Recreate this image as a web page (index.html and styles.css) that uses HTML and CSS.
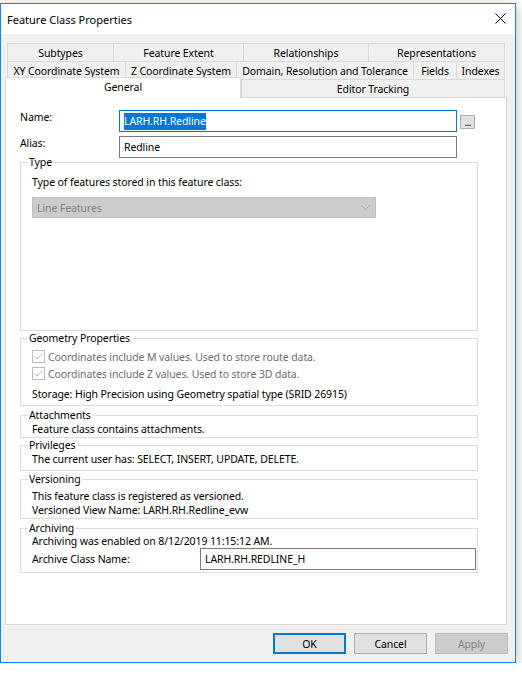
FILE: index.html
```html
<!DOCTYPE html>
<html lang="en">
  <head>
    <meta charset="UTF-8">
    <title>Feature Class Properties</title>
    <link rel="stylesheet" href="styles.css">
  </head>
  <body>
    <div class="window">
      <div class="titlebar">
        <span class="title">Feature Class Properties</span>
        <svg class="close" width="11" height="11" viewBox="0 0 11 11">
          <path d="M0.5 0.5 L10.5 10.5 M10.5 0.5 L0.5 10.5" stroke="#000" stroke-width="1" fill="none"/>
        </svg>
      </div>

      <div class="client">
        <!-- tab strip, three rows like the native control -->
        <div class="tab-row row-1">
          <div class="tab">Subtypes</div>
          <div class="tab">Feature Extent</div>
          <div class="tab">Relationships</div>
          <div class="tab">Representations</div>
        </div>
        <div class="tab-row row-2">
          <div class="tab">XY Coordinate System</div>
          <div class="tab">Z Coordinate System</div>
          <div class="tab">Domain, Resolution and Tolerance</div>
          <div class="tab">Fields</div>
          <div class="tab">Indexes</div>
        </div>
        <div class="tab-row row-3">
          <div class="tab active">General</div>
          <div class="tab">Editor Tracking</div>
        </div>

        <div class="panel">
          <div class="field">
            <label>Name:</label>
            <div class="textbox focused"><span class="selected">LARH.RH.Redline</span></div>
            <button class="browse">...</button>
          </div>
          <div class="field alias">
            <label>Alias:</label>
            <div class="textbox">Redline</div>
          </div>

          <fieldset class="group group-type">
            <legend>Type</legend>
            <div class="line type-note">Type of features stored in this feature class:</div>
            <div class="combo">
              <span>Line Features</span>
              <svg width="9" height="5" viewBox="0 0 9 5">
                <path d="M0.5 0.5 L4.5 4.5 L8.5 0.5" stroke="#a6a6a6" fill="none"/>
              </svg>
            </div>
          </fieldset>

          <fieldset class="group group-geometry">
            <legend>Geometry Properties</legend>
            <div class="check">
              <svg class="checkbox" width="13" height="13" viewBox="0 0 13 13">
                <rect x="0.5" y="0.5" width="12" height="12" fill="#fff" stroke="#bcbcbc"/>
                <path d="M2.5 6.5 L5 9 L10.5 3.5" stroke="#bcbcbc" fill="none"/>
              </svg>
              <span>Coordinates include M values. Used to store route data.</span>
            </div>
            <div class="check">
              <svg class="checkbox" width="13" height="13" viewBox="0 0 13 13">
                <rect x="0.5" y="0.5" width="12" height="12" fill="#fff" stroke="#bcbcbc"/>
                <path d="M2.5 6.5 L5 9 L10.5 3.5" stroke="#bcbcbc" fill="none"/>
              </svg>
              <span>Coordinates include Z values. Used to store 3D data.</span>
            </div>
            <div class="line storage">Storage: High Precision using Geometry spatial type (SRID 26915)</div>
          </fieldset>

          <fieldset class="group group-attachments">
            <legend>Attachments</legend>
            <div class="line">Feature class contains attachments.</div>
          </fieldset>

          <fieldset class="group group-privileges">
            <legend>Privileges</legend>
            <div class="line">The current user has: SELECT, INSERT, UPDATE, DELETE.</div>
          </fieldset>

          <fieldset class="group group-versioning">
            <legend>Versioning</legend>
            <div class="line">This feature class is registered as versioned.</div>
            <div class="line">Versioned View Name: LARH.RH.Redline_evw</div>
          </fieldset>

          <fieldset class="group group-archiving">
            <legend>Archiving</legend>
            <div class="line archive-date">Archiving was enabled on 8/12/2019 11:15:12 AM.</div>
            <div class="archive-row">
              <span>Archive Class Name:</span>
              <div class="textbox archive-name">LARH.RH.REDLINE_H</div>
            </div>
          </fieldset>
        </div>

        <div class="buttons">
          <button class="btn default">OK</button>
          <button class="btn">Cancel</button>
          <button class="btn" disabled>Apply</button>
        </div>
      </div>
    </div>
  </body>
</html>
```

FILE: styles.css
```css
* {
  box-sizing: border-box;
}
body {
  margin: 0;
  background-color: #fff;
  font-family: "Noto Sans", sans-serif;
  font-size: 10.5px;
  letter-spacing: -0.1px;
  color: #000;
}
.window {
  width: 516px;
  margin-top: 3px;
  border: 1px solid #1883d7;
  background-color: #f0f0f0;
  box-shadow: 0 3px 12px rgba(0, 0, 0, 0.3);
}
.titlebar {
  height: 30px;
  background-color: #fff;
  display: flex;
  align-items: center;
  justify-content: space-between;
  padding: 0 9px 0 6px;
}
.title {
  font-size: 11px;
  letter-spacing: 0;
}
.close {
  margin-top: -1px;
}

/* tabs */
.client {
  padding-top: 9px;
}
.tab-row {
  display: grid;
  height: 18px;
  margin-left: 6px;
}
.row-1 {
  grid-template-columns: 106px 130px 125px 137px;
}
.row-2 {
  grid-template-columns: 118px 111px 177px 43px 49px;
}
.row-3 {
  margin-left: 4px;
  grid-template-columns: 236px 264px;
}
.tab {
  height: 18px;
  border-top: 1px solid #d9d9d9;
  border-left: 1px solid #d9d9d9;
  text-align: center;
  line-height: 18px;
  white-space: nowrap;
}
.tab:last-child {
  border-right: 1px solid #d9d9d9;
}
.tab.active {
  position: relative;
  z-index: 1;
  height: 21px;
  margin-top: -2px;
  background-color: #fff;
  border-right: 1px solid #d9d9d9;
  line-height: 18px;
}

/* page body */
.panel {
  width: 502px;
  height: 528px;
  margin-left: 4px;
  padding: 12px 0 0 14px;
  background-color: #fff;
  border: 1px solid #d9d9d9;
}
.field {
  display: flex;
  height: 22px;
}
.field.alias {
  margin-top: 4px;
}
.field label {
  width: 99px;
  line-height: 15px;
}
.textbox {
  width: 338px;
  height: 22px;
  border: 1px solid #7a7a7a;
  padding-left: 4px;
  line-height: 20px;
  background-color: #fff;
}
.textbox.focused {
  border-color: #0078d7;
}
.selected {
  background-color: #0078d7;
  color: #fff;
  padding: 1px 0 2px;
}
.browse {
  width: 15px;
  height: 14px;
  margin: 5px 0 0 3px;
  padding: 0;
  border: 1px solid #adadad;
  background-color: #e1e1e1;
  font: 11px/6px "Noto Sans", sans-serif;
  color: #1a1466;
  letter-spacing: -1px;
}

/* group boxes */
.group {
  width: 458px;
  margin: 2px 0 0;
  padding: 0 0 0 11px;
  border: 1px solid #dcdcdc;
}
.group legend {
  margin-left: -4px;
  padding: 0 1px;
  line-height: 14px;
}
.line {
  line-height: 14px;
}
.group-type {
  margin-top: -3px;
  padding-bottom: 112px;
}
.type-note {
  margin-top: 6px;
  line-height: 15px;
}
.combo {
  width: 344px;
  height: 21px;
  margin-top: 7px;
  padding: 0 5px 0 4px;
  display: flex;
  align-items: center;
  justify-content: space-between;
  background-color: #cccccc;
  border: 1px solid #bfbfbf;
  color: #838383;
}
.group-geometry {
  margin-top: 0;
  padding-bottom: 3px;
}
.check {
  display: flex;
  align-items: center;
  height: 17px;
  color: #6d6d6d;
}
.check:first-of-type {
  margin-top: 3px;
}
.checkbox {
  margin-right: 3px;
}
.storage {
  margin-top: 5px;
  line-height: 15px;
}
.group-attachments {
  padding-bottom: 1px;
}
.group-privileges {
  margin-top: 0;
  padding-bottom: 4px;
}
.group-versioning {
  margin-top: 1px;
  padding-bottom: 1px;
}
.group-versioning legend + .line {
  margin-top: 3px;
}
.group-archiving {
  padding-bottom: 2px;
}
.archive-date {
  line-height: 13px;
}
.archive-row {
  display: flex;
  align-items: center;
  height: 22px;
}
.archive-row span {
  width: 168px;
}
.archive-name {
  width: 276px;
  padding-left: 4px;
}

/* dialog buttons */
.buttons {
  display: flex;
  justify-content: flex-end;
  gap: 8px;
  padding: 8px 7px 8px 0;
}
.btn {
  width: 73px;
  height: 21px;
  padding: 0;
  border: 1px solid #adadad;
  background-color: #e1e1e1;
  font: 10.5px "Noto Sans", sans-serif;
  letter-spacing: -0.1px;
  color: #000;
}
.btn.default {
  border: 2px solid #0078d7;
}
.btn:disabled {
  background-color: #cccccc;
  border-color: #bfbfbf;
  color: #838383;
}
```
